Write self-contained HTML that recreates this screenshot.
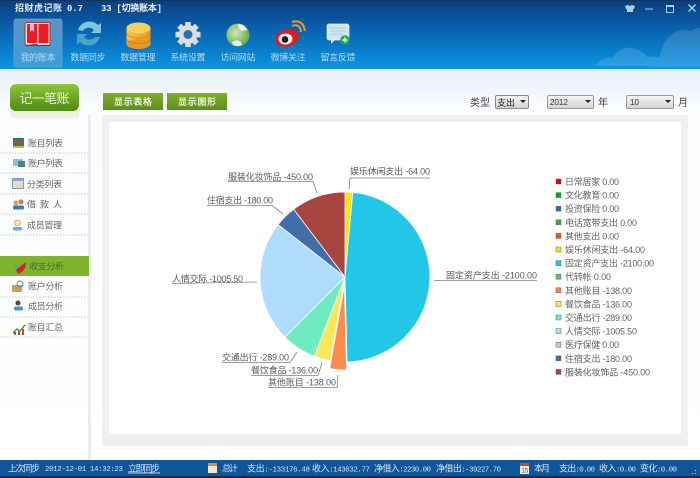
<!DOCTYPE html>
<html><head><meta charset="utf-8"><style>
html,body{margin:0;padding:0;width:700px;height:478px;overflow:hidden;background:#fff}
svg{display:block;font-family:"Liberation Sans","WenQuanYi Zen Hei","Noto Sans CJK SC",sans-serif}
.n{font-size:9px;fill:#b9dcf2;text-anchor:middle}
.s{font-size:9px;fill:#666}
.l{font-size:9px;fill:#626262}
.c{font-size:9px;fill:#5a5a5a}
.b{font-size:9px;fill:#d3e5f3}
.m{font-size:7.5px;fill:#d3e5f3;font-family:"Liberation Mono","WenQuanYi Zen Hei","Noto Sans CJK SC",monospace}
.ln{fill:none;stroke:#808080;stroke-width:.8}
.d{stroke:#c4cacf;stroke-width:1;stroke-dasharray:1.5 1.5}
</style></head><body>
<svg width="700" height="478" viewBox="0 0 700 478" xmlns="http://www.w3.org/2000/svg">
<defs>
<linearGradient id="h" x1="0" y1="0" x2="0" y2="1"><stop offset="0" stop-color="#0a3d7c"/><stop offset=".35" stop-color="#0a5ba8"/><stop offset="1" stop-color="#0896e4"/></linearGradient>
<linearGradient id="bg" x1="0" y1="0" x2="0" y2="1"><stop offset="0" stop-color="#e6eff8"/><stop offset=".1" stop-color="#fafcfe"/><stop offset="1" stop-color="#fff"/></linearGradient>
<linearGradient id="gb" x1="0" y1="0" x2="0" y2="1"><stop offset="0" stop-color="#8cc63a"/><stop offset="1" stop-color="#4d8a12"/></linearGradient>
<linearGradient id="gs" x1="0" y1="0" x2="0" y2="1"><stop offset="0" stop-color="#7fae2e"/><stop offset="1" stop-color="#5d8f16"/></linearGradient>
<linearGradient id="sel" x1="0" y1="0" x2="0" y2="1"><stop offset="0" stop-color="#f6f6f6"/><stop offset="1" stop-color="#d2d2d2"/></linearGradient>
<linearGradient id="act" x1="0" y1="0" x2="0" y2="1"><stop offset="0" stop-color="#5d92c4"/><stop offset="1" stop-color="#3b9fdc"/></linearGradient>
<linearGradient id="gold" x1="0" y1="0" x2="1" y2="0"><stop offset="0" stop-color="#f8c850"/><stop offset="1" stop-color="#e89a20"/></linearGradient>
<radialGradient id="globe" cx=".4" cy=".4" r=".7"><stop offset="0" stop-color="#cfe8b0"/><stop offset="1" stop-color="#58a33a"/></radialGradient>
</defs>

<rect width="700" height="478" fill="#fff"/>
<rect y="69" width="700" height="391" fill="url(#bg)"/>
<!-- header -->
<rect width="700" height="69" fill="url(#h)"/>
<rect width="700" height="1" fill="#123358"/>
<path d="M595 66q8-10 18-8q8-14 22-9q8 2 12 8q8-2 13 1q1-18 16-26q10-5 14 0q5-4 10-4v37v2z" fill="#fff" opacity=".14"/>
<text x="15" y="11" font-size="9" font-weight="bold" fill="#e6f0fa" textLength="47">招财虎记账</text>
<text x="67" y="11" font-size="9" font-weight="bold" fill="#e6f0fa" font-family="Liberation Mono" textLength="16">0.7</text>
<text x="101" y="11" font-size="9" font-weight="bold" fill="#e6f0fa" font-family="Liberation Mono,WenQuanYi Zen Hei" textLength="61">33 [切换账本]</text>
<!-- window controls -->
<g fill="#a9d0ea">
<path d="M625 6l3-1 2 1 2-1 3 1-1 3h-1v3h-6v-3h-1z"/>
<rect x="645" y="8.5" width="8" height="1"/>
<path d="M666 5h8v8h-8zM667 7v5h6v-5z" fill-rule="evenodd"/>
<path d="M688 5l1-1 3 3 3-3 1 1-3 3 3 3-1 1-3-3-3 3-1-1 3-3z"/>
</g>
<!-- nav -->
<rect x="14" y="19" width="48" height="48" rx="2" fill="url(#act)" stroke="#6ea2cd" stroke-width=".7"/>
<!-- book -->
<rect x="25" y="22.5" width="25" height="23" rx="1.5" fill="#f2dcd6" stroke="#9a3a3a"/>
<rect x="27" y="24" width="10" height="19" fill="#ec1c24"/>
<rect x="38.5" y="24" width="10" height="19" fill="#ec1c24"/>
<path d="M30 24h4v8l-2-2-2 2z" fill="#fbe"/>
<path d="M25 45l12-1 1 1 12 0v1h-25z" fill="#8a2a2a"/>
<!-- sync -->
<path d="M78 30a12 12 0 0 1 20-5l3-2v10h-10l3-3a7 7 0 0 0-11 1z" fill="#7fc6d8"/>
<path d="M100 37a12 12 0 0 1-20 5l-3 3v-11h10l-3 3a7 7 0 0 0 11 0z" fill="#4aa3c4"/>
<!-- coins -->
<rect x="126.500" y="28" width="24" height="16" fill="url(#gold)"/>
<ellipse cx="138.500" cy="44" rx="12" ry="5" fill="#e89a20"/>
<path d="M126.500 33a12 5 0 0 0 24 0M126.500 38.500a12 5 0 0 0 24 0" fill="none" stroke="#c87d18" stroke-width=".8"/>
<ellipse cx="138.500" cy="28" rx="12" ry="5.500" fill="#f9cf5c"/>
<!-- gear -->
<g transform="translate(188 34.500)"><circle r="9.500" fill="#d8dde0"/><g fill="#d8dde0"><rect x="-2.800" y="-12.500" width="5.600" height="25"/><rect x="-2.800" y="-12.500" width="5.600" height="25" transform="rotate(45)"/><rect x="-2.800" y="-12.500" width="5.600" height="25" transform="rotate(90)"/><rect x="-2.800" y="-12.500" width="5.600" height="25" transform="rotate(135)"/></g><circle r="4.500" fill="#2a6fa8"/></g>
<!-- globe -->
<circle cx="238" cy="35" r="11.500" fill="url(#globe)"/>
<path d="M232 42q5-3 9 0l1 3q-5 2-9 0zM238 24q6 0 9 6l-5 1q-4-2-4-7z" fill="#eef4e8"/>
<!-- weibo -->
<ellipse cx="287" cy="38" rx="12" ry="8.500" fill="#e3191c" transform="rotate(-15 287 38)"/>
<ellipse cx="285.500" cy="39" rx="7" ry="5.500" fill="#f5f5f5"/>
<circle cx="285" cy="39.500" r="3.300" fill="#151515"/>
<path d="M292 26q8-3 9 6M292 22q11-3 13 9" fill="none" stroke="#e79a2c" stroke-width="2"/>
<!-- feedback -->
<rect x="327" y="24" width="22" height="16" rx="2" fill="#cfe6f2" stroke="#e8f3f9" stroke-width=".7"/>
<path d="M330 28h16M330 31h16M330 34h12" stroke="#9cc4dc" stroke-width=".8"/>
<path d="M331 40v4l4-4z" fill="#cfe6f2"/>
<circle cx="345" cy="40" r="4.800" fill="#28a84a"/>
<path d="M342.500 40h5M345 37.500v5" stroke="#fff" stroke-width="1.400"/>

<text class="n" x="38" y="60.500" textLength="35">我的账本</text>
<text class="n" x="88" y="60.500" textLength="35">数据同步</text>
<text class="n" x="138" y="60.500" textLength="35">数据管理</text>
<text class="n" x="188" y="60.500" textLength="35">系统设置</text>
<text class="n" x="238" y="60.500" textLength="35">访问网站</text>
<text class="n" x="288" y="60.500" textLength="35">微博关注</text>
<text class="n" x="338" y="60.500" textLength="35">留言反馈</text>

<!-- sidebar -->
<rect x="88" y="115" width="3" height="345" fill="#e9edf0"/>
<rect x="10" y="110" width="69" height="8" rx="3" fill="#eef1e2"/>
<rect x="10" y="84" width="69" height="27" rx="6" fill="url(#gb)"/>
<text x="44.500" y="103" font-size="13" fill="#eaf6d8" text-anchor="middle" textLength="50">记一笔账</text>

<g class="d"><path d="M0 153H88M0 173H88M0 194H88M0 214H88M0 235H88M0 297H88M0 317H88M0 337H88" fill="none"/></g>
<text class="s" x="28" y="146.500" textLength="35">账目列表</text>
<text class="s" x="28" y="166.500" textLength="35">账户列表</text>
<text class="s" x="27" y="187.500" textLength="35">分类列表</text>
<text class="s" x="27" y="207.500" textLength="35">借 款 人</text>
<text class="s" x="27" y="228.500" textLength="35">成员管理</text>
<rect x="0" y="256" width="89" height="20" fill="#7eb52c"/>
<text x="29" y="269.500" font-size="9" fill="#4c6a2c" textLength="35">收支分析</text>
<text class="s" x="28" y="289.500" textLength="35">账户分析</text>
<text class="s" x="28" y="309.500" textLength="35">成员分析</text>
<text class="s" x="28" y="330.500" textLength="35">账目汇总</text>
<!-- sidebar icons -->
<g>
<rect x="13" y="138" width="11" height="10" fill="#3d7a5a"/><rect x="13" y="141" width="11" height="2" fill="#a05050"/><rect x="13" y="146" width="11" height="2" fill="#e0b030"/>
<rect x="13" y="159" width="10" height="7" fill="#8cc0e8"/><rect x="18" y="161" width="7" height="6" fill="#4a8a6a"/>
<rect x="12.500" y="178.500" width="11" height="10" fill="#e8dcc0" stroke="#7a9ec4"/><rect x="13" y="179" width="10" height="2" fill="#80a8d8"/>
<circle cx="16" cy="203" r="2.500" fill="#e0a050"/><circle cx="21" cy="202" r="2.500" fill="#c08040"/><rect x="13" y="205.500" width="11" height="4" rx="1.500" fill="#3a7ac0"/>
<circle cx="17.500" cy="223" r="3" fill="#fbe8b8" stroke="#d8a040" stroke-width=".8"/><rect x="13" y="227" width="9" height="3.500" rx="1.500" fill="#70a8e0"/>
<path d="M16 270l10-8q0 9-8 12z" fill="#d8202a"/><path d="M14 263l5 4-3 3z" fill="#5f9ca8"/>
<rect x="12" y="285" width="10" height="7" fill="#c8a060"/><circle cx="20" cy="284" r="3" fill="none" stroke="#4a8ac0"/>
<circle cx="18" cy="303" r="2.500" fill="#604030"/><rect x="14" y="306.500" width="9" height="4" rx="1.500" fill="#5090c8"/>
<path d="M13 333l4-4 3 2 5-6" fill="none" stroke="#5a9a30" stroke-width="1.500"/><rect x="14" y="332" width="2" height="3" fill="#c04a30"/><rect x="18" y="331" width="2" height="4" fill="#c04a30"/><rect x="22" y="329" width="2" height="6" fill="#c04a30"/>
</g>

<!-- top buttons -->
<rect x="103" y="93" width="60" height="17" fill="url(#gs)"/>
<rect x="167" y="93" width="60" height="17" fill="url(#gs)"/>
<text x="114" y="105" font-size="9" font-weight="bold" fill="#f2f6e4" textLength="38">显示表格</text>
<text x="178" y="105" font-size="9" font-weight="bold" fill="#f2f6e4" textLength="38">显示图形</text>
<!-- selects -->
<text x="470" y="106" font-size="10" fill="#444" textLength="20">类型</text>
<rect x="495.500" y="95.500" width="33" height="13" rx="1.500" fill="url(#sel)" stroke="#888"/>
<text x="497" y="106" font-size="9" fill="#222" textLength="18">支出</text>
<path d="M520 100h6l-3 3z" fill="#222"/>
<rect x="547.500" y="95.500" width="46" height="13" rx="1.500" fill="url(#sel)" stroke="#999"/>
<text x="550" y="105" font-size="8" fill="#333">2012</text>
<path d="M585 100h6l-3 3z" fill="#222"/>
<text x="598" y="106" font-size="10" fill="#444">年</text>
<rect x="626.500" y="95.500" width="47" height="13" rx="1.500" fill="url(#sel)" stroke="#999"/>
<text x="630" y="105" font-size="8" fill="#333">10</text>
<path d="M665 100h6l-3 3z" fill="#222"/>
<text x="678" y="106" font-size="10" fill="#444">月</text>

<!-- main panel -->
<rect x="102" y="115" width="586" height="331" fill="#eff1f0"/>
<rect x="109" y="122" width="572" height="312" fill="#fff"/>

<!-- pie -->
<g stroke="#fff" stroke-width=".8">
<path d="M345 277L345 192A85 85 0 0 1 352.800 192.400Z" fill="#f0e61e"/>
<path d="M345 277L352.800 192.400A85 85 0 0 1 347.100 362Z" fill="#22c6e6"/>
<path d="M344.400 285L346.500 370A85 85 0 0 1 329.700 368.700Z" fill="#fa8c4e"/>
<path d="M345 277L330.300 360.700A85 85 0 0 1 314.300 356.300Z" fill="#fae65a"/>
<path d="M345 277L314.300 356.300A85 85 0 0 1 284.900 337.100Z" fill="#6eecc0"/>
<path d="M345 277L284.900 337.100A85 85 0 0 1 278.100 224.600Z" fill="#aedcfa"/>
<path d="M345 277L278.100 224.600A85 85 0 0 1 293.700 209.200Z" fill="#3f6ea8"/>
<path d="M345 277L293.700 209.200A85 85 0 0 1 345 192Z" fill="#a8453f"/>
</g>
<!-- leader lines -->
<path class="ln" d="M228 181.500H313L317 193"/>
<path class="ln" d="M350 178H430M350 178L349 189"/>
<path class="ln" d="M207 205.500H272L283 214"/>
<path class="ln" d="M172 283.500L257 282"/>
<path class="ln" d="M434 280.500H537"/>
<path class="ln" d="M222 362.500H290L297 352"/>
<path class="ln" d="M251 375.500H318L322 363"/>
<path class="ln" d="M268 387.500H337L338 375"/>
<text class="c" x="228" y="180" textLength="85">服装化妆饰品 -450.00</text>
<text class="c" x="350" y="174.500" textLength="80">娱乐休闲支出 -64.00</text>
<text class="c" x="207" y="203.500" textLength="66">住宿支出 -180.00</text>
<text class="c" x="172" y="282" textLength="71">人情交际 -1005.50</text>
<text class="c" x="446" y="278.500" textLength="91">固定资产支出 -2100.00</text>
<text class="c" x="222" y="360.500" textLength="67">交通出行 -289.00</text>
<text class="c" x="251" y="373.500" textLength="67">餐饮食品 -136.00</text>
<text class="c" x="268" y="385.500" textLength="68">其他账目 -138.00</text>

<!-- legend -->
<g stroke="#666" stroke-width=".5">
<rect x="556" y="179" width="5" height="5" fill="#e00000"/>
<rect x="556" y="192.600" width="5" height="5" fill="#10a010"/>
<rect x="556" y="206.200" width="5" height="5" fill="#1878b8"/>
<rect x="556" y="219.800" width="5" height="5" fill="#48a038"/>
<rect x="556" y="233.400" width="5" height="5" fill="#e05a20"/>
<rect x="556" y="247" width="5" height="5" fill="#f0e61e"/>
<rect x="556" y="260.600" width="5" height="5" fill="#22c6e6"/>
<rect x="556" y="274.200" width="5" height="5" fill="#50c868"/>
<rect x="556" y="287.800" width="5" height="5" fill="#f08848"/>
<rect x="556" y="301.400" width="5" height="5" fill="#fae65a"/>
<rect x="556" y="315" width="5" height="5" fill="#6eecc0"/>
<rect x="556" y="328.600" width="5" height="5" fill="#aedcfa"/>
<rect x="556" y="342.200" width="5" height="5" fill="#c8c8c8"/>
<rect x="556" y="355.800" width="5" height="5" fill="#3f6ea8"/>
<rect x="556" y="369.400" width="5" height="5" fill="#a8453f"/>
</g>
<text class="l" x="565" y="185" textLength="54">日常居家 0.00</text>
<text class="l" x="565" y="198.600" textLength="54">文化教育 0.00</text>
<text class="l" x="565" y="212.200" textLength="54">投资保险 0.00</text>
<text class="l" x="565" y="225.800" textLength="72">电话宽带支出 0.00</text>
<text class="l" x="565" y="239.400" textLength="54">其他支出 0.00</text>
<text class="l" x="565" y="253" textLength="80">娱乐休闲支出 -64.00</text>
<text class="l" x="565" y="266.600" textLength="89">固定资产支出 -2100.00</text>
<text class="l" x="565" y="280.200" textLength="46">代转帐 0.00</text>
<text class="l" x="565" y="293.800" textLength="67">其他账目 -138.00</text>
<text class="l" x="565" y="307.400" textLength="67">餐饮食品 -136.00</text>
<text class="l" x="565" y="321" textLength="67">交通出行 -289.00</text>
<text class="l" x="565" y="334.600" textLength="72">人情交际 -1005.50</text>
<text class="l" x="565" y="348.200" textLength="54">医疗保健 0.00</text>
<text class="l" x="565" y="361.800" textLength="67">住宿支出 -180.00</text>
<text class="l" x="565" y="375.400" textLength="85">服装化妆饰品 -450.00</text>

<!-- status bar -->
<rect y="460" width="700" height="18" fill="#0f5598"/>
<rect y="476" width="700" height="2" fill="#0c2f55"/>
<text class="b" x="8" y="471.500" textLength="32">上次同步</text>
<text class="m" x="45" y="471" textLength="78">2012-12-01 14:32:23</text>
<text class="b" x="128" y="471.500" text-decoration="underline" textLength="32">立即同步</text>
<rect x="208" y="463" width="9" height="10" fill="#f4e8d0"/><rect x="208" y="463" width="9" height="3" fill="#e08a40"/>
<text class="b" x="222" y="471.500" textLength="16">总计</text>
<text class="m" x="247" y="471.500" textLength="63"><tspan font-size="9">支出</tspan>:-133176.48</text>
<text class="m" x="312" y="471.500" textLength="58"><tspan font-size="9">收入</tspan>:143632.77</text>
<text class="m" x="374" y="471.500" textLength="57"><tspan font-size="9">净借入</tspan>:2230.00</text>
<text class="m" x="436" y="471.500" textLength="65"><tspan font-size="9">净借出</tspan>:-39227.70</text>
<rect x="520" y="463" width="9" height="11" fill="#f0f0f0"/><rect x="520" y="463" width="9" height="3" fill="#d8442c"/>
<text x="521.500" y="472.500" font-size="6" fill="#444">15</text>
<text class="b" x="534" y="471.500" textLength="16">本月</text>
<text class="m" x="559" y="471.500" textLength="36"><tspan font-size="9">支出</tspan>:0.00</text>
<text class="m" x="599" y="471.500" textLength="37"><tspan font-size="9">收入</tspan>:0.00</text>
<text class="m" x="640" y="471.500" textLength="37"><tspan font-size="9">变化</tspan>:0.00</text>
<path d="M695 473h1v1h-1zM692 473h1v1h-1zM695 470h1v1h-1z" fill="#c8d8e6"/>
</svg>
</body></html>
